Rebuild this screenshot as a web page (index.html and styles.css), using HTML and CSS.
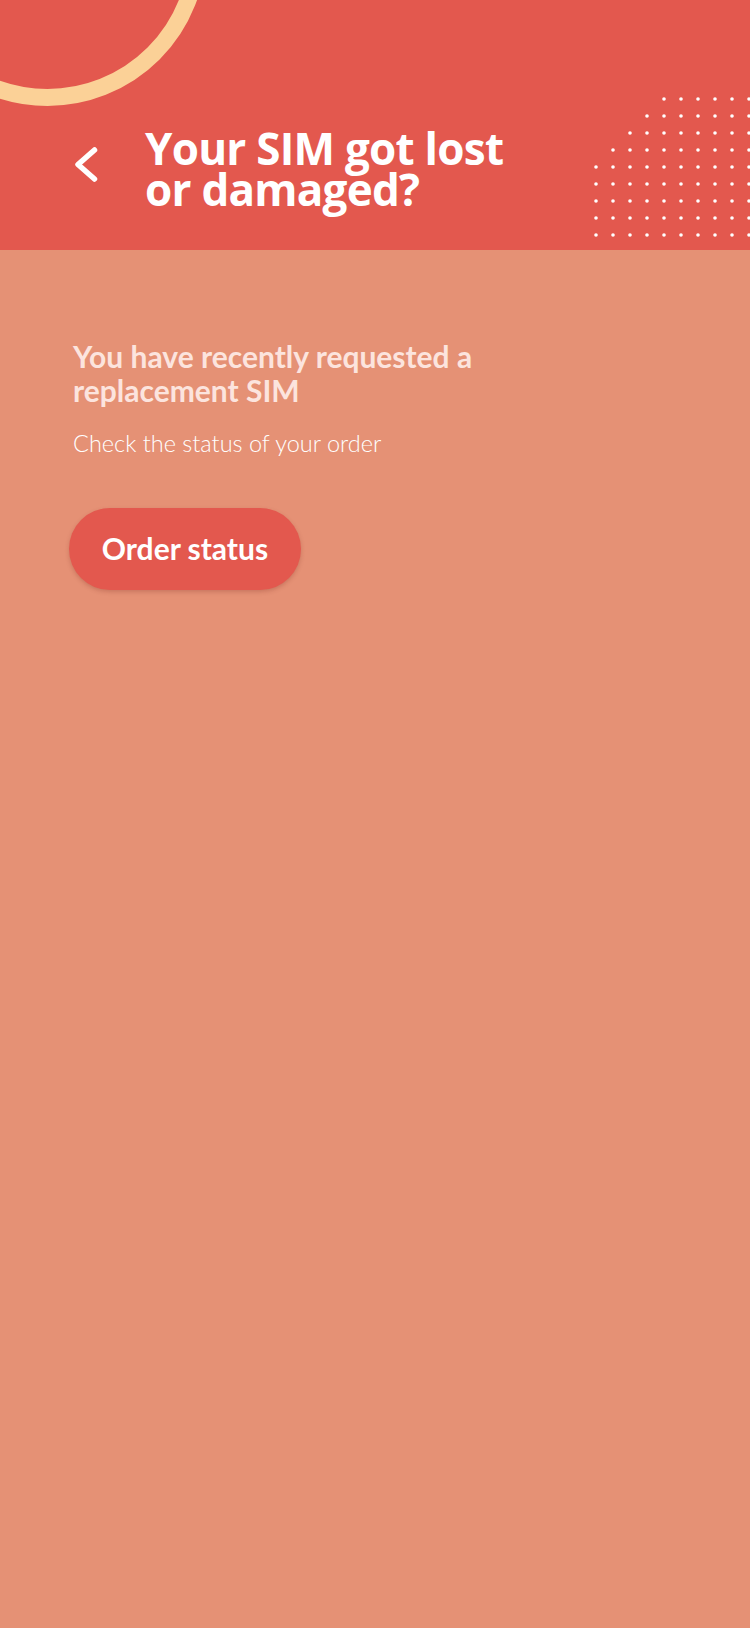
FILE: index.html
```html
<!DOCTYPE html>
<html lang="en">
<head>
<meta charset="utf-8">
<title>Your SIM got lost or damaged?</title>
<link rel="stylesheet" href="styles.css">
</head>
<body>
<div class="page">
  <header class="header">
    <div class="ring"></div>
    <svg class="dots" width="160" height="150" viewBox="0 0 160 150" aria-hidden="true">
      <defs>
        <pattern id="dot" x="0" y="0" width="17" height="17" patternUnits="userSpaceOnUse">
          <circle cx="2" cy="2" r="1.8" fill="#fff"/>
        </pattern>
      </defs>
      <rect x="68" y="0" width="92" height="17" fill="url(#dot)"/>
      <rect x="51" y="17" width="109" height="17" fill="url(#dot)"/>
      <rect x="34" y="34" width="126" height="17" fill="url(#dot)"/>
      <rect x="17" y="51" width="143" height="17" fill="url(#dot)"/>
      <rect x="0" y="68" width="160" height="85" fill="url(#dot)"/>
    </svg>
    <div class="header-row">
      <button class="back" aria-label="Back">
        <svg width="28" height="38" viewBox="0 0 28 38"><path d="M22.5 5 L6 19.5 L22.5 34" fill="none" stroke="#fff" stroke-width="5.5" stroke-linecap="round" stroke-linejoin="round"/></svg>
      </button>
      <h1 class="title">Your SIM got lost<br>or damaged?</h1>
    </div>
  </header>
  <main class="content">
    <h2 class="heading">You have recently requested a<br>replacement SIM</h2>
    <p class="sub">Check the status of your order</p>
    <button class="order-btn">Order status</button>
  </main>
</div>
</body>
</html>
```
FILE: styles.css
```css
html, body {
  margin: 0;
  padding: 0;
}
body {
  background: #E59175;
  font-family: "Lato", "Open Sans", sans-serif;
}
.page {
  min-height: 1628px;
  background: #E59175;
}
.header {
  position: relative;
  height: 250px;
  background: #E3584E;
  overflow: hidden;
  box-sizing: border-box;
  padding-top: 128px;
}
.ring {
  position: absolute;
  left: -111px;
  top: -211px;
  width: 283px;
  height: 283px;
  border: 17px solid #FBD197;
  border-radius: 50%;
}
.dots {
  position: absolute;
  left: 594px;
  top: 97px;
}
.header-row {
  position: relative;
  display: flex;
  align-items: flex-start;
  padding-left: 72px;
}
.back {
  background: none;
  border: 0;
  padding: 0;
  margin: 17px 0 0 0;
  width: 28px;
  height: 38px;
  cursor: pointer;
}
.back svg {
  display: block;
}
.title {
  margin: 0 0 0 45px;
  color: #fff;
  font-family: "Open Sans", sans-serif;
  font-weight: 700;
  font-size: 44px;
  line-height: 41px;
  letter-spacing: -0.75px;
}
.content {
  padding: 0 0 0 73px;
}
.heading {
  margin: 89px 0 0 0;
  color: #FCE4DE;
  font-family: "Lato", sans-serif;
  font-weight: 700;
  font-size: 30px;
  line-height: 34px;
}
.sub {
  margin: 22px 0 0 0;
  color: #fff;
  font-family: "Lato", sans-serif;
  font-weight: 300;
  font-size: 23.5px;
  line-height: 28px;
}
.order-btn {
  display: block;
  margin: 51px 0 0 -4px;
  width: 232px;
  height: 82px;
  padding: 0 0 2px 0;
  border: 0;
  border-radius: 41px;
  background: #E3584E;
  color: #fff;
  font-family: "Lato", sans-serif;
  font-weight: 700;
  font-size: 30px;
  box-shadow: 0 2px 4px rgba(120, 40, 30, 0.25);
  cursor: pointer;
}
```
